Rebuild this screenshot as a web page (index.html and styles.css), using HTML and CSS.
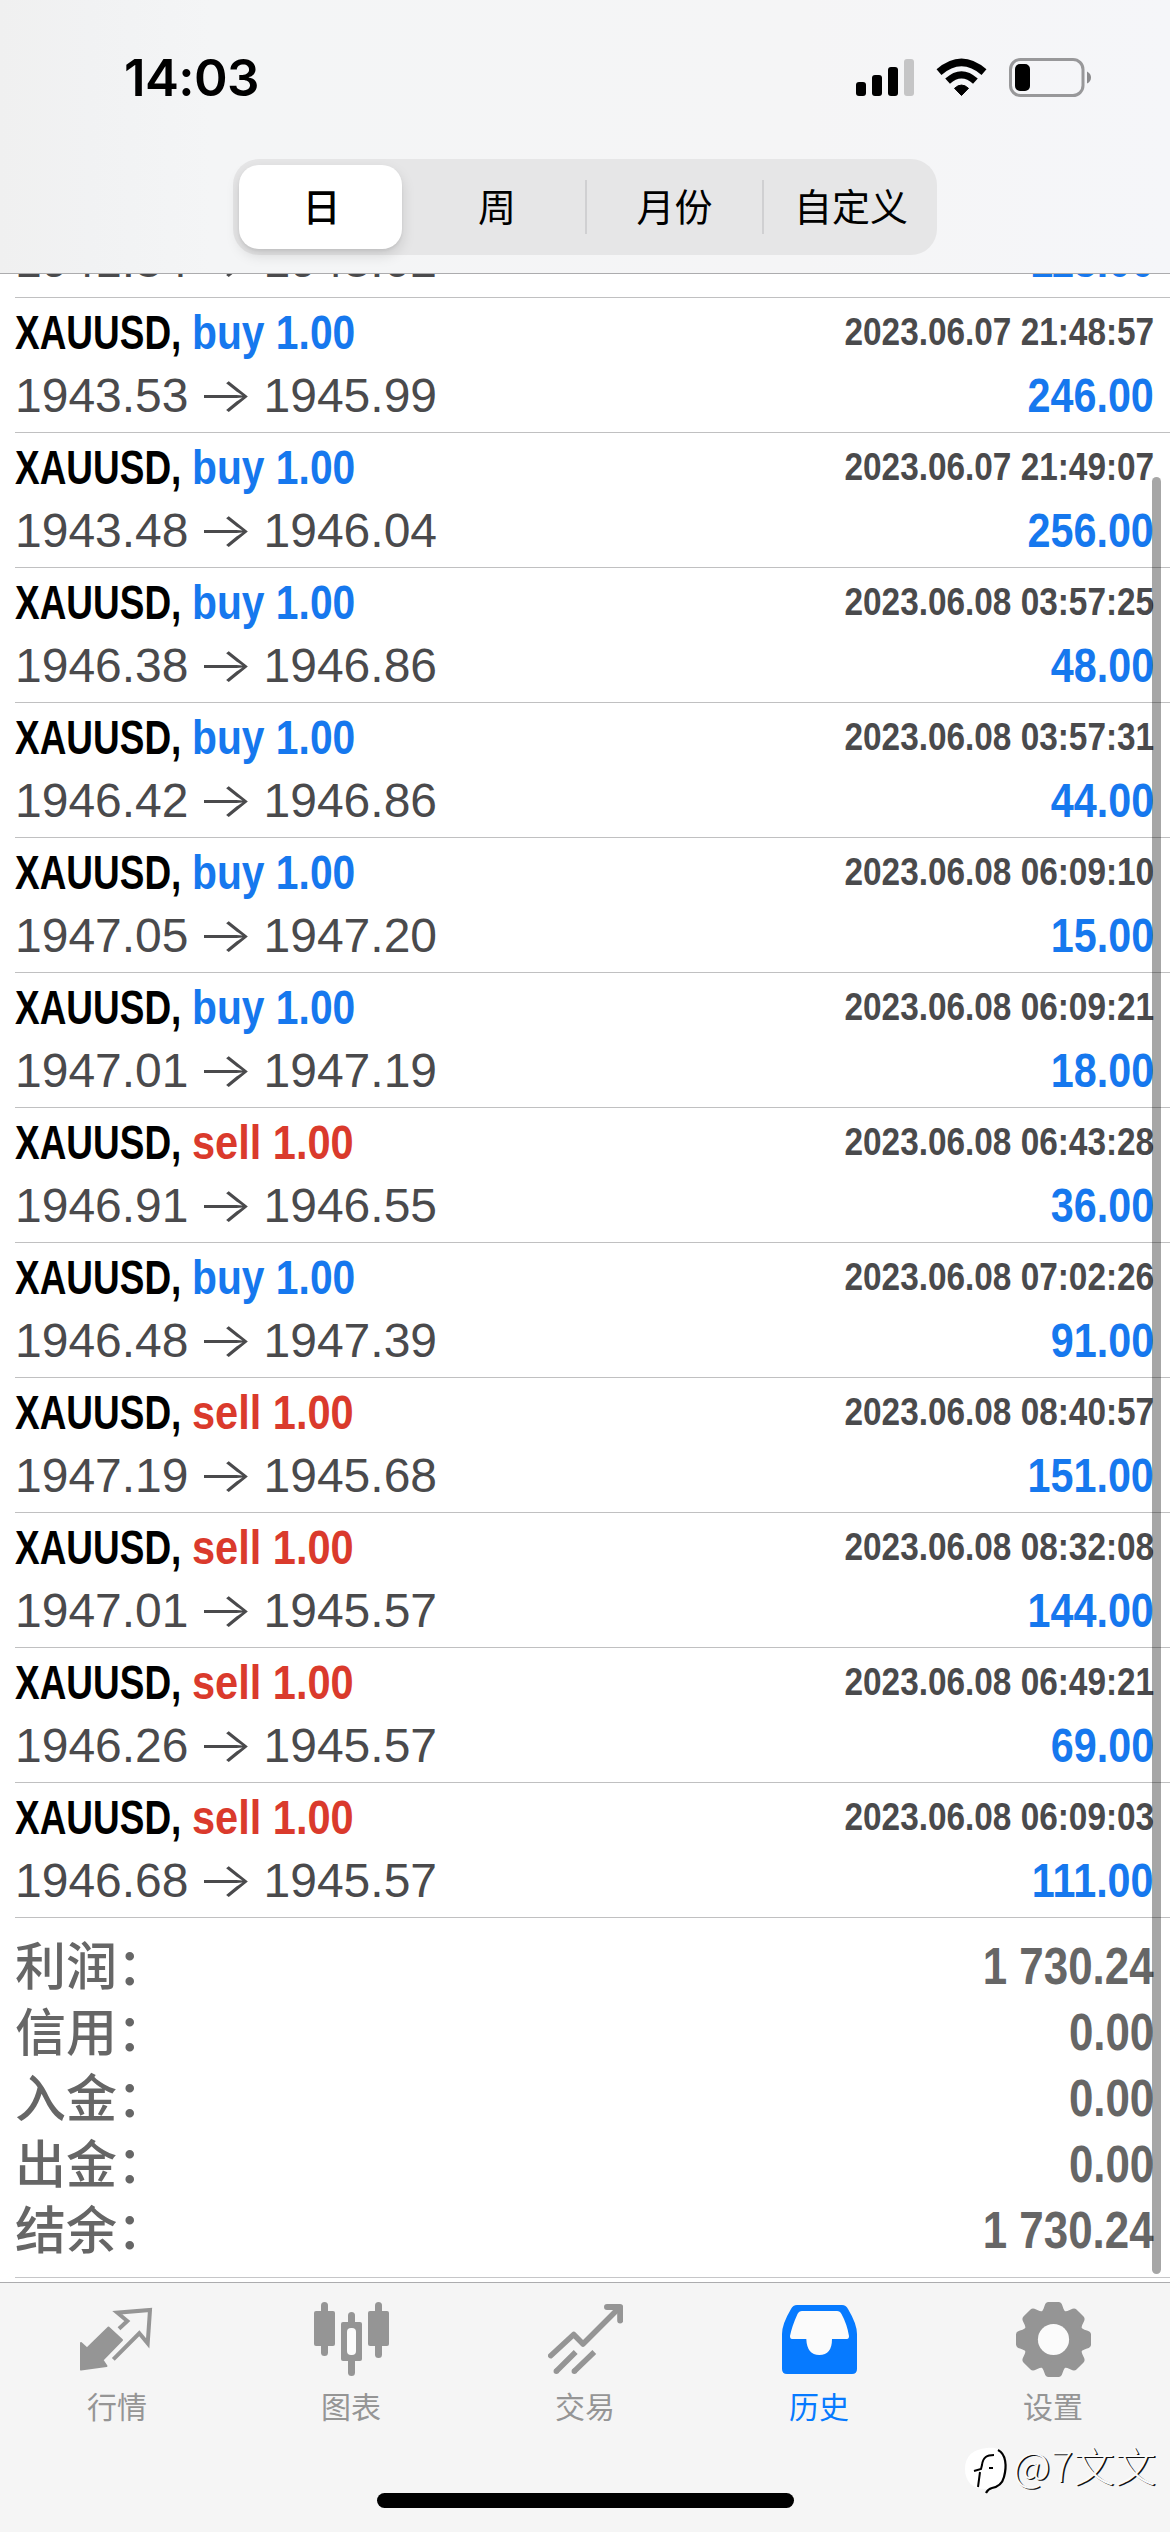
FILE: index.html
```html
<!DOCTYPE html>
<html lang="zh-CN">
<head>
<meta charset="utf-8">
<title>历史</title>
<link rel="stylesheet" href="styles.css">
</head>
<body>
<div class="screen">
  <header class="header">
    <div class="status">
      <div class="clock">14:03</div>
      <svg class="status-icons" width="236" height="40" viewBox="0 0 236 40">
        <rect x="0" y="24" width="10" height="14" rx="3"/>
        <rect x="16" y="17" width="10" height="21" rx="3"/>
        <rect x="32" y="9" width="10" height="29" rx="3"/>
        <rect x="48" y="1" width="10" height="37" rx="3" fill="#c5c5c6"/>
        <path d="M105.500 37.500 L98.500 30.300 Q105.500 23.800 112.500 30.300 Z" stroke="#000" stroke-width="1" stroke-linejoin="round"/>
        <path d="M91.600 23.200 Q105.500 10.500 119.400 23.200" fill="none" stroke="#000" stroke-width="7"/>
        <path d="M83 14.200 Q105.500 -5.300 128 14.200" fill="none" stroke="#000" stroke-width="7.500"/>
        <rect x="154.500" y="1.500" width="72.500" height="36" rx="10" fill="none" stroke="#98989a" stroke-width="3"/>
        <rect x="159" y="6" width="15" height="27" rx="5"/>
        <path d="M231 13.500 q4 2 4 6 q0 4 -4 6 z" fill="#8b8b8d"/>
      </svg>
    </div>
    <nav class="segments">
      <span class="segment selected">日</span>
      <span class="segment">周</span>
      <span class="segment divided">月份</span>
      <span class="segment divided wide">自定义</span>
    </nav>
  </header>

  <main class="list" id="list">
    <div class="deals">
      <article class="deal clipped"><div class="line"><span class="price">1941.84</span><span class="arrow">→</span><span class="price">1943.02</span><b class="profit">118.00</b></div></article>
      <article class="deal"><div class="line"><b class="symbol">XAUUSD,</b><b class="side buy">buy 1.00</b><time>2023.06.07 21:48:57</time></div><div class="line"><span class="price">1943.53</span><span class="arrow">→</span><span class="price">1945.99</span><b class="profit">246.00</b></div></article>
      <article class="deal"><div class="line"><b class="symbol">XAUUSD,</b><b class="side buy">buy 1.00</b><time>2023.06.07 21:49:07</time></div><div class="line"><span class="price">1943.48</span><span class="arrow">→</span><span class="price">1946.04</span><b class="profit">256.00</b></div></article>
      <article class="deal"><div class="line"><b class="symbol">XAUUSD,</b><b class="side buy">buy 1.00</b><time>2023.06.08 03:57:25</time></div><div class="line"><span class="price">1946.38</span><span class="arrow">→</span><span class="price">1946.86</span><b class="profit">48.00</b></div></article>
      <article class="deal"><div class="line"><b class="symbol">XAUUSD,</b><b class="side buy">buy 1.00</b><time>2023.06.08 03:57:31</time></div><div class="line"><span class="price">1946.42</span><span class="arrow">→</span><span class="price">1946.86</span><b class="profit">44.00</b></div></article>
      <article class="deal"><div class="line"><b class="symbol">XAUUSD,</b><b class="side buy">buy 1.00</b><time>2023.06.08 06:09:10</time></div><div class="line"><span class="price">1947.05</span><span class="arrow">→</span><span class="price">1947.20</span><b class="profit">15.00</b></div></article>
      <article class="deal"><div class="line"><b class="symbol">XAUUSD,</b><b class="side buy">buy 1.00</b><time>2023.06.08 06:09:21</time></div><div class="line"><span class="price">1947.01</span><span class="arrow">→</span><span class="price">1947.19</span><b class="profit">18.00</b></div></article>
      <article class="deal"><div class="line"><b class="symbol">XAUUSD,</b><b class="side sell">sell 1.00</b><time>2023.06.08 06:43:28</time></div><div class="line"><span class="price">1946.91</span><span class="arrow">→</span><span class="price">1946.55</span><b class="profit">36.00</b></div></article>
      <article class="deal"><div class="line"><b class="symbol">XAUUSD,</b><b class="side buy">buy 1.00</b><time>2023.06.08 07:02:26</time></div><div class="line"><span class="price">1946.48</span><span class="arrow">→</span><span class="price">1947.39</span><b class="profit">91.00</b></div></article>
      <article class="deal"><div class="line"><b class="symbol">XAUUSD,</b><b class="side sell">sell 1.00</b><time>2023.06.08 08:40:57</time></div><div class="line"><span class="price">1947.19</span><span class="arrow">→</span><span class="price">1945.68</span><b class="profit">151.00</b></div></article>
      <article class="deal"><div class="line"><b class="symbol">XAUUSD,</b><b class="side sell">sell 1.00</b><time>2023.06.08 08:32:08</time></div><div class="line"><span class="price">1947.01</span><span class="arrow">→</span><span class="price">1945.57</span><b class="profit">144.00</b></div></article>
      <article class="deal"><div class="line"><b class="symbol">XAUUSD,</b><b class="side sell">sell 1.00</b><time>2023.06.08 06:49:21</time></div><div class="line"><span class="price">1946.26</span><span class="arrow">→</span><span class="price">1945.57</span><b class="profit">69.00</b></div></article>
      <article class="deal"><div class="line"><b class="symbol">XAUUSD,</b><b class="side sell">sell 1.00</b><time>2023.06.08 06:09:03</time></div><div class="line"><span class="price">1946.68</span><span class="arrow">→</span><span class="price">1945.57</span><b class="profit">111.00</b></div></article>
      <section class="summary">
        <div class="total"><span>利润：</span><b>1 730.24</b></div>
        <div class="total"><span>信用：</span><b>0.00</b></div>
        <div class="total"><span>入金：</span><b>0.00</b></div>
        <div class="total"><span>出金：</span><b>0.00</b></div>
        <div class="total"><span>结余：</span><b>1 730.24</b></div>
      </section>
    </div>
    <div class="scrollbar"></div>
  </main>

  <footer class="tabbar">
    <div class="tabs">
      <div class="tab">
        <svg width="75" height="75" viewBox="0 0 75 75">
          <path d="M1 41 L7 46.500 L28.500 25.500 L42 38 L22.500 58 L26.500 64 L1 67.500 Z" fill="currentColor" stroke="currentColor" stroke-width="2" stroke-linejoin="round"/>
          <path d="M39 26.700 L47.300 19 L37.300 10.700 L70 8 L67.700 41.300 L59.300 31.300 L33.300 57.300" fill="none" stroke="currentColor" stroke-width="4"/>
        </svg>
        <span>行情</span>
      </div>
      <div class="tab">
        <svg width="75" height="75" viewBox="0 0 75 75" fill="currentColor">
          <rect x="7" y="0" width="7" height="54" rx="3.500"/><rect x="0" y="9" width="21" height="35" rx="2"/>
          <rect x="61" y="0" width="7" height="56" rx="3.500"/><rect x="54" y="9" width="21" height="35" rx="2"/>
          <rect x="34" y="10" width="7" height="64" rx="3.500"/><rect x="27" y="20" width="21" height="39" rx="2"/>
          <rect x="33" y="26" width="9" height="27" rx="4" fill="#fbfbfb"/>
        </svg>
        <span>图表</span>
      </div>
      <div class="tab">
        <svg width="75" height="75" viewBox="0 0 75 75" fill="none" stroke="currentColor" stroke-width="5.500">
          <path d="M2.700 53.700 L25.700 32.500 L35 42 L71 6" stroke-linecap="round" stroke-linejoin="round"/>
          <path d="M59 5 H72.200 V18.500" stroke-width="6" stroke-linecap="round" stroke-linejoin="round"/>
          <path d="M8.300 69.300 L27.700 50 M26.300 69.300 L46.300 50"/>
          <path d="M8.300 69.300 h.01 M26.300 69.300 h.01" stroke-linecap="round"/>
        </svg>
        <span>交易</span>
      </div>
      <div class="tab active">
        <svg width="75" height="75" viewBox="0 0 75 75">
          <path d="M15 3 H60 Q64 3 66 7 Q75 22 75 32 V67 Q75 72 70 72 H5 Q0 72 0 67 V32 Q0 22 9 7 Q11 3 15 3 Z" fill="currentColor"/>
          <path d="M20 9 H55 Q58 9 59.500 12 Q65 22 67 34 Q67 37 65 37 H50 Q50 53 37.300 53 Q25 53 24.300 37 H10 Q8 37 8 34 Q10 24 15.500 12 Q17 9 20 9 Z" fill="#fbfbfb"/>
        </svg>
        <span>历史</span>
      </div>
      <div class="tab">
        <svg width="75" height="75" viewBox="-37.500 -37.500 75 75" fill="currentColor">
          <defs><path id="teeth" d="M-5 -37.500 H5 Q8 -37.500 9 -33.500 Q10.500 -28 14 -26 V26 Q10.500 28 9 33.500 Q8 37.500 5 37.500 H-5 Q-8 37.500 -9 33.500 Q-10.500 28 -14 26 V-26 Q-10.500 -28 -9 -33.500 Q-8 -37.500 -5 -37.500 Z"/></defs>
          <use href="#teeth"/><use href="#teeth" transform="rotate(45)"/><use href="#teeth" transform="rotate(90)"/><use href="#teeth" transform="rotate(135)"/>
          <circle r="15.600" fill="#fbfbfb"/>
        </svg>
        <span>设置</span>
      </div>
    </div>
    <div class="home"></div>
    <div class="watermark">
      <svg width="46" height="52" viewBox="0 0 46 52">
        <path d="M22 2 C38 0 43 10 41 24 C40 36 34 42 24 43 C8 44 0 36 0 23 C0 10 8 3 22 2 Z" fill="#fff"/>
        <path d="M29 9 C22 9 18 11 17 19 L16 23 L9 25 M15 26 L13 41 M24 22 H28" fill="none" stroke="#000" stroke-width="2"/>
        <path d="M33 4 C41 8 42 20 39 31 C37 39 32 41 27 42 Q23 43 21 47" fill="none" stroke="#000" stroke-width="2.200"/>
      </svg>
      <span>@7文文</span>
    </div>
  </footer>
</div>
</body>
</html>
```
FILE: styles.css
```css
* { box-sizing: border-box; }

body {
  margin: 0;
  background: #fff;
  font-family: "Liberation Sans", "Noto Sans CJK SC", sans-serif;
}

.screen {
  display: flex;
  flex-direction: column;
  width: 1170px;
  height: 2532px;
  overflow: hidden;
}

.header {
  flex: none;
  height: 274px;
  border-bottom: 1px solid #acacae;
  background: linear-gradient(90deg, #f0f0f0 0, #f1f2f3 90px, #f4f5f6 210px, #f5f5f6 800px, #f5f6f9 100%);
}

.status {
  display: flex;
  justify-content: space-between;
  height: 159px;
  padding: 58px 78px 0 124px;
}

.clock {
  height: 40px;
  font: 600 51px/40px Inter, sans-serif;
  letter-spacing: -.6px;
  color: #000;
}

.segments {
  display: grid;
  grid-template-columns: 168px 178px 177px 1fr;
  width: 704px;
  height: 96px;
  margin: 0 auto;
  padding: 6px;
  border-radius: 26px;
  background: #e6e6e7;
}

.segment {
  display: flex;
  align-items: center;
  justify-content: center;
  padding: 0 0 5px 2px;
  font: 400 38px/1 "Noto Sans CJK SC", sans-serif;
  color: #000;
}

.selected {
  margin-right: 5px;
  border-radius: 20px;
  background: #fff;
  box-shadow: 0 6px 14px rgba(0, 0, 0, .13), 0 2px 3px rgba(0, 0, 0, .06);
  font-weight: 500;
}

.divided {
  background: linear-gradient(#d0d0d2, #d0d0d2) left center / 2px 54px no-repeat;
}

.wide { padding-left: 9px; }

.list {
  position: relative;
  flex: none;
  height: 2008px;
  overflow: hidden;
}

.deals { margin-left: 15px; }

.deal {
  display: flex;
  flex-direction: column;
  gap: 6px;
  height: 135px;
  padding: 7px 16px 0 0;
  border-bottom: 1px solid #c0c0c1;
}

.clipped {
  height: 66px;
  margin-top: -42px;
  padding-top: 0;
}

.line {
  display: flex;
  height: 56px;
  font-size: 48px;
  line-height: 56px;
  white-space: nowrap;
}

.symbol {
  width: 177px;
  color: #000;
  transform: scaleX(.77);
  transform-origin: left;
}

.side {
  transform: scaleX(.85);
  transform-origin: left;
}

.buy { color: #1678ee; }

.sell {
  color: #da3a2c;
  transform: scaleX(.865);
}

time {
  margin-left: auto;
  font-size: 39px;
  font-weight: 700;
  line-height: 53px;
  color: #4a4a4c;
  transform: scaleX(.855);
  transform-origin: right;
}

.price {
  padding-top: 1px;
  color: #4a4a4c;
}

.arrow {
  display: flex;
  justify-content: center;
  width: 75px;
  padding-right: 2px;
  font-family: Inter, sans-serif;
  font-weight: 300;
  color: #4a4a4c;
  transform: scaleX(1.25);
}

.profit {
  margin-left: auto;
  padding-top: 1px;
  color: #1678ee;
  transform: scaleX(.86);
  transform-origin: right;
}

.summary {
  height: 360px;
  padding: 16px 16px 0 0;
  border-bottom: 1px solid #c6c6c8;
  color: #666;
}

.total {
  display: flex;
  justify-content: space-between;
  height: 66px;
  font-size: 51px;
  line-height: 66px;
}

.total span {
  font-family: "Noto Sans CJK SC", sans-serif;
  font-weight: 500;
  line-height: 58px;
}

.total b {
  transform: scaleX(.86);
  transform-origin: right;
}

.scrollbar {
  position: absolute;
  top: 203px;
  right: 9px;
  width: 9px;
  height: 1797px;
  border-radius: 5px;
  background: rgba(0, 0, 0, .35);
}

.tabbar {
  position: relative;
  display: flex;
  flex-direction: column;
  flex: 1;
  border-top: 1px solid #acacae;
  background: #f5f5f5;
}

.tabs {
  display: grid;
  grid-template-columns: repeat(5, 1fr);
  height: 210px;
  padding-top: 19px;
}

.tab {
  display: flex;
  flex-direction: column;
  align-items: center;
  gap: 8px;
  font: 400 30px/40px "Noto Sans CJK SC", sans-serif;
  color: #959595;
}

.active { color: #067aff; }

.home {
  width: 417px;
  height: 15px;
  margin: 0 auto;
  border-radius: 8px;
  background: #000;
}

.watermark {
  position: absolute;
  top: 163px;
  left: 965px;
  display: flex;
  align-items: flex-start;
  gap: 2px;
  color: #fafafa;
  font: 300 41px/36px "Noto Sans CJK SC", sans-serif;
  letter-spacing: .6px;
  text-shadow: 1.500px 1px 0 #111;
  white-space: nowrap;
}
```
